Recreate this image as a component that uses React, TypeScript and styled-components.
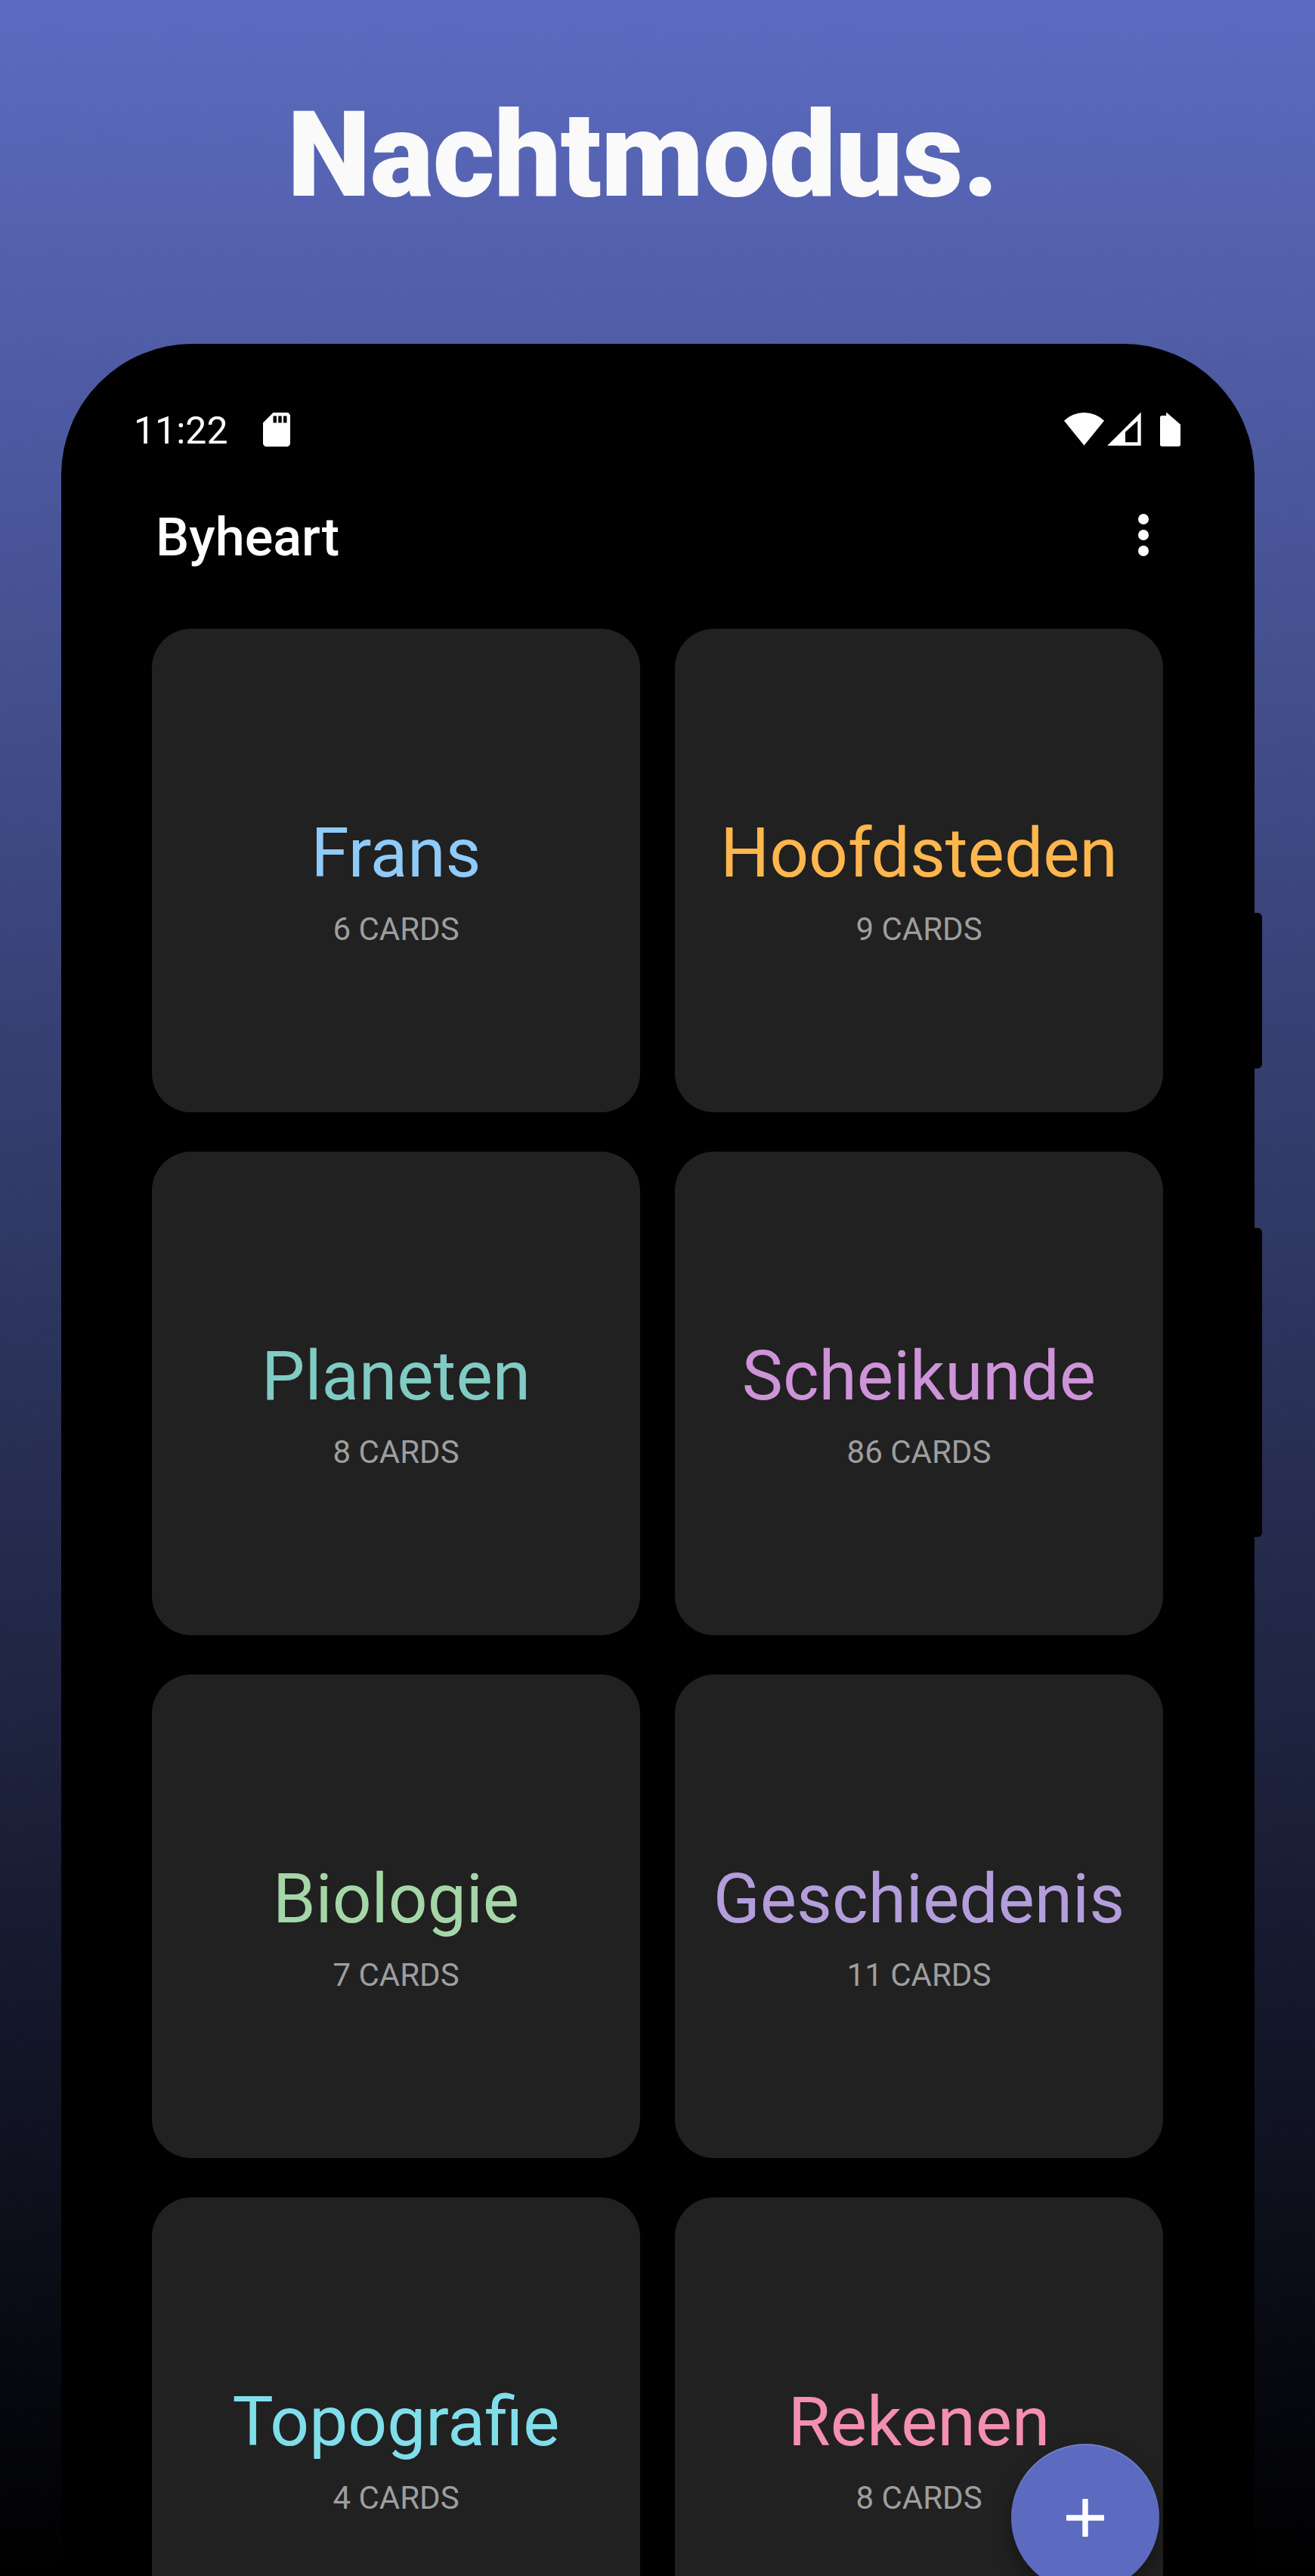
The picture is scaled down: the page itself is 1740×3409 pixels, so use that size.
import React from "react";
import styled, { createGlobalStyle } from "styled-components";

const GlobalStyle = createGlobalStyle`
  body { margin: 0; background: #000; }
  * { box-sizing: border-box; }
`;

const Poster = styled.main`
  position: relative;
  width: 1740px;
  height: 3409px;
  overflow: hidden;
  display: flex;
  flex-direction: column;
  background: linear-gradient(180deg, #5c6bc0 0%, #000 100%);
  font-family: Roboto, "Liberation Sans", sans-serif;
`;

const Headline = styled.h1`
  margin: 0;
  height: 455px;
  flex: none;
  padding: 113px 0 0 380px;
  font-size: 157.5px;
  line-height: 184px;
  font-weight: 900;
  letter-spacing: -0.8px;
  color: #fafafa;
  white-space: nowrap;
`;

const Phone = styled.section`
  position: relative;
  flex: none;
  width: 1579px;
  height: 3300px;
  margin-left: 81px;
  padding: 77px 120px 0;
  border-radius: 174px 174px 0 0;
  background: #000;
`;

const SideButton = styled.div<{ $top: number; $height: number }>`
  position: absolute;
  left: 100%;
  top: ${(p) => p.$top}px;
  width: 10px;
  height: ${(p) => p.$height}px;
  border-radius: 0 6px 6px 0;
  background: #000;
`;

const StatusBar = styled.div`
  display: flex;
  justify-content: space-between;
  height: 80px;
  margin: 0 -22px 0 -24px;
`;

const StatusGroup = styled.div`
  display: flex;
  align-items: flex-start;
`;

const Clock = styled.time`
  width: 170.500px;
  padding-top: 8px;
  font-size: 50px;
  line-height: 60px;
  color: #fff;
`;

const StatusGlyph = styled.svg`
  display: block;
  margin-top: 14px;
  overflow: visible;
  fill: #fff;
`;

const AppBar = styled.header`
  display: flex;
  justify-content: space-between;
  align-items: flex-start;
  height: 220px;
  padding: 58px 20px 0 5px;
`;

const AppTitle = styled.h2`
  margin: 0;
  font-size: 70.2px;
  line-height: 82px;
  font-weight: 500;
  color: #fff;
`;

const MenuButton = styled.div`
  display: flex;
  flex-direction: column;
  gap: 7px;
  padding-top: 10px;
`;

const Dot = styled.span`
  width: 14px;
  height: 14px;
  border-radius: 50%;
  background: #fff;
`;

const DeckGrid = styled.div`
  display: grid;
  grid-template-columns: repeat(2, 646px);
  grid-auto-rows: 640px;
  gap: 52px 46px;
`;

const Deck = styled.article`
  display: flex;
  flex-direction: column;
  align-items: center;
  padding-top: 244px;
  border-radius: 52px;
  background: #212121;
`;

const DeckName = styled.h3<{ $color: string }>`
  margin: 0;
  font-size: 91px;
  line-height: 106px;
  font-weight: 400;
  color: ${(p) => p.$color};
`;

const DeckCount = styled.span`
  margin-top: 23px;
  font-size: 42px;
  line-height: 50px;
  color: #9e9e9e;
`;

const AddButton = styled.button`
  position: absolute;
  left: 1338px;
  top: 3234px;
  width: 196px;
  height: 196px;
  padding: 0;
  border: 0;
  border-radius: 50%;
  display: flex;
  align-items: center;
  justify-content: center;
  background: #5c6bc0;
  box-shadow:
    inset 0 2px 1px rgba(255, 255, 255, 0.14),
    0 14px 24px rgba(0, 0, 0, 0.34);
`;

const decks = [
  { name: "Frans", count: 6, color: "#90caf9" },
  { name: "Hoofdsteden", count: 9, color: "#ffb74d" },
  { name: "Planeten", count: 8, color: "#80cbc4" },
  { name: "Scheikunde", count: 86, color: "#ce93d8" },
  { name: "Biologie", count: 7, color: "#a5d6a7" },
  { name: "Geschiedenis", count: 11, color: "#b39ddb" },
  { name: "Topografie", count: 4, color: "#80deea" },
  { name: "Rekenen", count: 8, color: "#f48fb1" },
];

const SdCardIcon = () => (
  <StatusGlyph width="36" height="45" viewBox="4 2 16 20">
    <path d="M18 2h-8L4.020 8 4 20c0 1.100.9 2 2 2h12c1.100 0 2-.9 2-2V4c0-1.100-.9-2-2-2zm-6 6h-2V4h2v4zm3 0h-2V4h2v4zm3 0h-2V4h2v4z" />
  </StatusGlyph>
);

// Wi-Fi, mobile signal and battery share one strip.
const SignalIcons = () => (
  <StatusGlyph width="154" height="45" viewBox="0 0 154 45">
    <path d="M0 10.700A38 38 0 0 1 53 10.700L26.500 43.500z" />
    <path fillRule="evenodd" d="M57.200 43.800L101.700-.5V43.800zM81 39.200H97.300V11L81 25.800z" />
    <path d="M127 6.500Q127 4 129.500 4H135.200V-.4L154 15.700V42.200Q154 44.700 151.500 44.700H129.500Q127 44.700 127 42.200z" />
  </StatusGlyph>
);

const PlusIcon = () => (
  <svg width="50" height="50" viewBox="0 0 50 50" fill="#fff">
    <path d="M21.300 0h7.400v21.300H50v7.400H28.700V50h-7.400V28.700H0v-7.400h21.300z" />
  </svg>
);

export default function App() {
  return (
    <>
      <GlobalStyle />
      <Poster>
        <Headline>Nachtmodus.</Headline>
        <Phone>
          <SideButton $top={753} $height={206} />
          <SideButton $top={1170} $height={409} />
          <StatusBar>
            <StatusGroup>
              <Clock>11:22</Clock>
              <SdCardIcon />
            </StatusGroup>
            <StatusGroup>
              <SignalIcons />
            </StatusGroup>
          </StatusBar>
          <AppBar>
            <AppTitle>Byheart</AppTitle>
            <MenuButton>
              <Dot />
              <Dot />
              <Dot />
            </MenuButton>
          </AppBar>
          <DeckGrid>
            {decks.map((d) => (
              <Deck key={d.name}>
                <DeckName $color={d.color}>{d.name}</DeckName>
                <DeckCount>{d.count} CARDS</DeckCount>
              </Deck>
            ))}
          </DeckGrid>
        </Phone>
        <AddButton aria-label="Add">
          <PlusIcon />
        </AddButton>
      </Poster>
    </>
  );
}
